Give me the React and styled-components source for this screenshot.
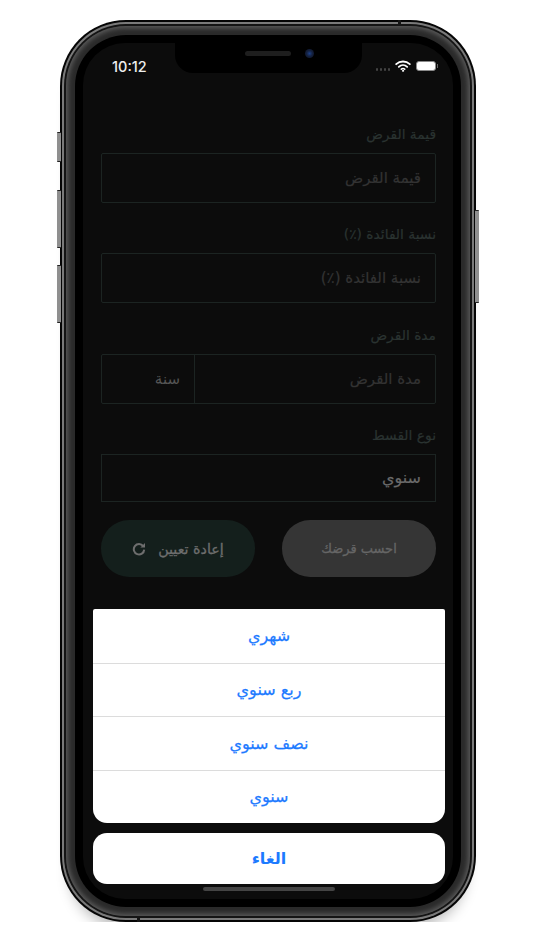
import React from 'react';
import styled, { createGlobalStyle } from 'styled-components';

const OPTIONS = ['شهري', 'ربع سنوي', 'نصف سنوي', 'سنوي'];

const App = () => (
  <>
    <GlobalStyle />
    <Phone>
      <SideButton $top={112} $height={30} />
      <SideButton $top={170} $height={58} />
      <SideButton $top={245} $height={58} />
      <SideButton $right $top={190} $height={93} />
      <Antenna $left={338} />
      <Antenna $left={77} $bottom />
      <Edge>
        <Groove>
          <Band>
            <Bezel>
              <Screen>
                <Notch>
                  <Speaker />
                  <Camera />
                </Notch>
                <StatusBar>
                  <Time>10:12</Time>
                  <StatusIcons>
                    <SignalDots>
                      <i /><i /><i /><i />
                    </SignalDots>
                    <svg width="16" height="12" viewBox="0 0 16 12" fill="none" stroke="#fff" strokeLinecap="round">
                      <path d="M1.2 4.2C5 .6 11 .6 14.8 4.2" strokeWidth="1.8" />
                      <path d="M3.8 6.8c2.4-2.2 6-2.2 8.4 0" strokeWidth="1.8" />
                      <path d="M6.3 9.2c1-.8 2.4-.8 3.4 0" strokeWidth="1.6" />
                      <circle cx="8" cy="10.8" r=".6" fill="#fff" />
                    </svg>
                    <Battery />
                  </StatusIcons>
                </StatusBar>

                <Form dir="rtl">
                  <Group>
                    <Label>قيمة القرض</Label>
                    <Field><Placeholder>قيمة القرض</Placeholder></Field>
                  </Group>
                  <Group>
                    <Label>نسبة الفائدة (٪)</Label>
                    <Field><Placeholder>نسبة الفائدة (٪)</Placeholder></Field>
                  </Group>
                  <Group>
                    <Label>مدة القرض</Label>
                    <Field>
                      <Placeholder>مدة القرض</Placeholder>
                      <Unit>سنة</Unit>
                    </Field>
                  </Group>
                  <Group>
                    <Label>نوع القسط</Label>
                    <Field $short><Value>سنوي</Value></Field>
                  </Group>
                  <Buttons>
                    <ActionButton>احسب قرضك</ActionButton>
                    <ActionButton $reset>
                      إعادة تعيين
                      <svg width="14" height="14" viewBox="0 0 14 14" fill="none">
                        <path d="M11.2 4.2A5.2 5.2 0 1 0 12.2 7.6" stroke="#6e6e6e" strokeWidth="2" />
                        <path d="M13 1v4.6H8.4z" fill="#6e6e6e" />
                      </svg>
                    </ActionButton>
                  </Buttons>
                </Form>

                <ActionSheet dir="rtl">
                  <OptionList>
                    {OPTIONS.map((option) => (
                      <Option key={option}>{option}</Option>
                    ))}
                  </OptionList>
                  <CancelButton>الغاء</CancelButton>
                </ActionSheet>
                <HomeIndicator />
              </Screen>
            </Bezel>
          </Band>
        </Groove>
      </Edge>
    </Phone>
  </>
);

const GlobalStyle = createGlobalStyle`
  html, body {
    margin: 0;
    background: #fff;
  }
  body {
    font-family: "DejaVu Sans", "Noto Sans", sans-serif;
    overflow: hidden;
  }
  * {
    box-sizing: border-box;
  }
`;

const Phone = styled.div`
  position: relative;
  isolation: isolate;
  width: 416px;
  height: 902px;
  margin: 20px 0 0 60px;
  padding: 2px;
  border-radius: 66px;
  background: #050505;
  box-shadow: 0 16px 14px -10px rgba(0, 0, 0, 0.28);
`;

const SideButton = styled.div`
  position: absolute;
  top: ${(p) => p.$top}px;
  ${(p) => (p.$right ? 'right: -3px;' : 'left: -3px;')}
  width: 4px;
  height: ${(p) => p.$height}px;
  border-radius: 1px;
  background: #8f8f8f;
  border: solid #222;
  border-width: 1px 0;
  z-index: -1;
`;

const Antenna = styled.div`
  position: absolute;
  ${(p) => (p.$bottom ? 'bottom: 0;' : 'top: 0;')}
  left: ${(p) => p.$left}px;
  width: 3px;
  height: 6px;
  background: #151515;
  z-index: 1;
`;

const Edge = styled.div`
  height: 100%;
  padding: 2px;
  border-radius: 64px;
  background: #7a7a7a;
`;

const Groove = styled.div`
  height: 100%;
  padding: 2px;
  border-radius: 62px;
  background: #141414;
`;

const Band = styled.div`
  height: 100%;
  padding: 9px;
  border-radius: 60px;
  background: #2a2a2a;
  box-shadow: inset 0 0 5px 2px #5c5c5c;
`;

const Bezel = styled.div`
  height: 100%;
  padding: 8px;
  border-radius: 51px;
  background: #000;
`;

const Screen = styled.div`
  position: relative;
  height: 100%;
  border-radius: 42px;
  background: #0c0c0c;
  overflow: hidden;
`;

const Notch = styled.div`
  position: absolute;
  top: 0;
  left: 92px;
  width: 187px;
  height: 30px;
  display: flex;
  align-items: center;
  justify-content: center;
  gap: 14px;
  padding: 0 0 9px 22px;
  background: #000;
  border-radius: 0 0 18px 18px;
`;

const Speaker = styled.div`
  width: 46px;
  height: 5px;
  border-radius: 3px;
  background: #1e1e1e;
`;

const Camera = styled.div`
  width: 9px;
  height: 9px;
  border-radius: 50%;
  background: radial-gradient(circle, #1c3f88 0, #14213f 45%, #0d1020 100%);
`;

const StatusBar = styled.div`
  height: 46px;
  padding: 0 17px 0 29px;
  display: flex;
  justify-content: space-between;
  align-items: center;
`;

const Time = styled.span`
  font: 500 14.5px Inter, sans-serif;
  color: #eee;
`;

const StatusIcons = styled.div`
  display: flex;
  align-items: center;
  gap: 5px;
`;

const SignalDots = styled.div`
  display: flex;
  gap: 1.5px;
  margin-top: 7px;

  i {
    width: 2.5px;
    height: 2.5px;
    border-radius: 50%;
    background: #444;
  }
`;

const Battery = styled.div`
  position: relative;
  width: 20px;
  height: 10px;
  border: 1px solid #8a8a8a;
  border-radius: 3px;
  background: #fff;

  &::after {
    content: '';
    position: absolute;
    right: -3px;
    top: 2px;
    width: 1px;
    height: 4px;
    background: #666;
  }
`;

const Form = styled.div`
  padding: 35px 17px 0 18px;
  display: flex;
  flex-direction: column;
  gap: 21.3px;
`;

const Group = styled.div`
  display: flex;
  flex-direction: column;
  gap: 9px;
`;

const Label = styled.div`
  height: 20px;
  line-height: 20px;
  font-size: 13.8px;
  -webkit-text-stroke: 0.2px #2a3331;
  color: #2a3331;
`;

const Field = styled.div`
  display: flex;
  align-items: stretch;
  height: ${(p) => (p.$short ? 48 : 50)}px;
  border: 1px solid #1c2422;
  border-radius: ${(p) => (p.$short ? 0 : 2)}px;
`;

const Placeholder = styled.div`
  flex: 1;
  display: flex;
  align-items: center;
  padding: 0 14px;
  font-size: 15px;
  -webkit-text-stroke: 0.2px #333;
  color: #333;
`;

const Value = styled(Placeholder)`
  font-size: 16px;
  -webkit-text-stroke: 0.2px #6a6a6a;
  color: #6a6a6a;
`;

const Unit = styled.div`
  width: 93px;
  display: flex;
  align-items: center;
  padding: 0 14px;
  border-right: 1px solid #1c2422;
  font-size: 15px;
  color: #555;
`;

const Buttons = styled.div`
  display: flex;
  justify-content: space-between;
  margin-top: -3px;
`;

const ActionButton = styled.div`
  width: 154px;
  height: 57px;
  display: flex;
  align-items: center;
  justify-content: center;
  gap: 12px;
  border-radius: 28px;
  font-size: ${(p) => (p.$reset ? 14.3 : 13)}px;
  -webkit-text-stroke: 0.3px ${(p) => (p.$reset ? '#6e6e6e' : '#666')};
  color: ${(p) => (p.$reset ? '#6e6e6e' : '#666')};
  background: ${(p) => (p.$reset ? '#141f1c' : '#353535')};
`;

const ActionSheet = styled.div`
  position: absolute;
  left: 10px;
  right: 8px;
  bottom: 15px;
  display: flex;
  flex-direction: column;
  gap: 10px;
`;

const OptionList = styled.div`
  background: #fff;
  border-radius: 2px 2px 14px 14px;
  overflow: hidden;
`;

const Option = styled.div`
  height: 53.5px;
  display: flex;
  align-items: center;
  justify-content: center;
  font-size: 16px;
  -webkit-text-stroke: 0.25px #1c7aff;
  color: #1c7aff;

  & + & {
    border-top: 1px solid #dcdcdc;
  }
`;

const CancelButton = styled.div`
  height: 51px;
  display: flex;
  align-items: center;
  justify-content: center;
  background: #fff;
  border-radius: 14px;
  font-size: 16px;
  font-weight: 700;
  color: #1c7aff;
`;

const HomeIndicator = styled.div`
  position: absolute;
  left: 120px;
  bottom: 8px;
  width: 132px;
  height: 4px;
  border-radius: 2px;
  background: #444;
`;

export default App;
